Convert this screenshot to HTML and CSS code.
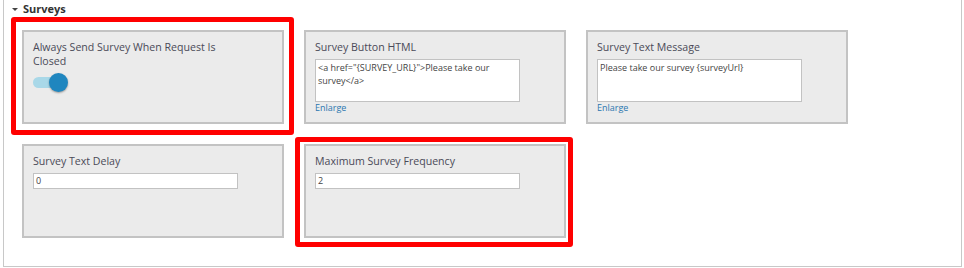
FILE: index.html
```html
<!DOCTYPE html>
<html lang="en">
<head>
<meta charset="utf-8">
<title>Surveys</title>
<link rel="stylesheet" href="styles.css">
</head>
<body>
<section class="panel">
  <header class="panel-head">
    <span class="caret"></span>
    <span class="panel-title">Surveys</span>
  </header>
  <div class="grid">
    <div class="card hl hl-a">
      <label class="label">Always Send Survey When Request Is Closed</label>
      <div class="toggle"><span class="track"></span><span class="knob"></span></div>
    </div>
    <div class="card">
      <label class="label">Survey Button HTML</label>
      <div class="area">&lt;a href="{SURVEY_URL}"&gt;Please take our survey&lt;/a&gt;</div>
      <a class="enlarge">Enlarge</a>
    </div>
    <div class="card">
      <label class="label">Survey Text Message</label>
      <div class="area">Please take our survey {surveyUrl}</div>
      <a class="enlarge">Enlarge</a>
    </div>
    <div class="card">
      <label class="label">Survey Text Delay</label>
      <div class="input">0</div>
    </div>
    <div class="card hl hl-b">
      <label class="label">Maximum Survey Frequency</label>
      <div class="input">2</div>
    </div>
  </div>
</section>
</body>
</html>
```
FILE: styles.css
```css
html, body {
  margin: 0;
  padding: 0;
  background: #ffffff;
}
body {
  width: 964px;
  height: 268px;
  overflow: hidden;
  font-family: "Open Sans", "Liberation Sans", sans-serif;
  color: #4a4a55;
}
.panel {
  margin-left: 3px;
  width: 959px;
  height: 267px;
  border: 1px solid #c8c8c8;
  border-top: none;
  box-sizing: border-box;
}
.panel-head {
  display: flex;
  align-items: center;
  height: 17px;
  padding-left: 8px;
  gap: 5px;
}
.caret {
  width: 0;
  height: 0;
  border-left: 3px solid transparent;
  border-right: 3px solid transparent;
  border-top: 3px solid #444;
  margin-top: 1px;
}
.panel-title {
  font-weight: 700;
  font-size: 11px;
  color: #333333;
  line-height: 17px;
}
.grid {
  display: grid;
  grid-template-columns: repeat(3, 262px);
  grid-auto-rows: 94px;
  column-gap: 20px;
  row-gap: 20px;
  padding: 13px 0 0 18px;
}
.card {
  position: relative;
  box-sizing: border-box;
  border: 2px solid #c3c3c3;
  background: #ebebeb;
  padding: 8px 9px;
  display: flex;
  flex-direction: column;
  align-items: flex-start;
}
.label {
  font-size: 10.6px;
  line-height: 14px;
  width: 205px;
  margin-bottom: 5px;
  color: #4a4a58;
}
.area {
  box-sizing: border-box;
  width: 205px;
  height: 44px;
  background: #fff;
  border: 1px solid #c2c2c2;
  padding: 1px 2px;
  font-size: 9px;
  line-height: 13px;
  color: #444;
}
.input {
  box-sizing: border-box;
  width: 205px;
  height: 16px;
  background: #fff;
  border: 1px solid #c2c2c2;
  padding: 0 2px;
  font-size: 9px;
  line-height: 14px;
  color: #444;
}
.enlarge {
  font-size: 9px;
  line-height: 12px;
  color: #2b77b0;
}
.toggle {
  position: relative;
  width: 36px;
  height: 19px;
  margin-top: 0;
}
.track {
  position: absolute;
  left: 0;
  top: 4px;
  width: 30px;
  height: 11px;
  border-radius: 6px;
  background: #a9d8e8;
}
.knob {
  position: absolute;
  left: 16px;
  top: 0;
  width: 19px;
  height: 19px;
  border-radius: 50%;
  background: #1f86bf;
  box-shadow: 0 1px 2px rgba(0,0,0,0.35);
}
.hl::after {
  content: "";
  position: absolute;
  box-sizing: border-box;
  border: 5px solid #ff0000;
  border-radius: 3px;
  pointer-events: none;
}
.hl-a::after {
  left: -13px;
  top: -15px;
  width: 283px;
  height: 118px;
}
.hl-b::after {
  left: -11px;
  top: -9px;
  width: 278px;
  height: 110px;
}
```
